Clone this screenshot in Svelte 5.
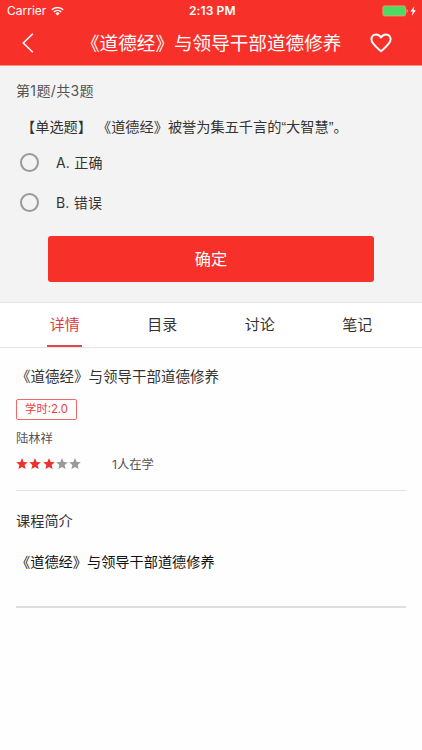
<script>
  const title = "《道德经》与领导干部道德修养";
  const options = [
    { key: "A", text: "正确" },
    { key: "B", text: "错误" },
  ];
  const tabs = ["详情", "目录", "讨论", "笔记"];
  const rating = 3;

  let activeTab = $state(0);
  let selected = $state(null);
  let liked = $state(false);
</script>

<div class="app">
  <header>
    <div class="status">
      <span class="carrier">Carrier</span>
      <svg class="wifi" width="13" height="10" viewBox="0 0 13 10" fill="none" stroke="#fff" stroke-width="1.5">
        <path d="M0.8 3.7a8.2 8.2 0 0 1 11.4 0" />
        <path d="M2.9 5.9a5.2 5.2 0 0 1 7.2 0" />
        <path d="M6.5 9.5 4.4 7.4a3 3 0 0 1 4.2 0z" fill="#fff" stroke="none" />
      </svg>
      <span class="time">2:13 PM</span>
      <svg class="battery" width="36" height="12" viewBox="0 0 36 12">
        <rect x="0.9" y="0.9" width="22.6" height="10" rx="1.6" fill="#4cd964" stroke="#e9a06c" stroke-width="0.9" />
        <path d="M24.6 4v4c1.3-.4 1.3-3.6 0-4z" fill="#ffb3ae" />
        <path d="M32.4 1.2 28.4 6.6h2.3l-.8 4.2 4-5.6h-2.4z" fill="#fff" />
      </svg>
    </div>
    <div class="nav">
      <button class="back" aria-label="返回">
        <svg width="12" height="20" viewBox="0 0 12 20" fill="none" stroke="#fff" stroke-width="1.6">
          <path d="M10.8 0.8 1.3 10l9.5 9.2" />
        </svg>
      </button>
      <h1>{title}</h1>
      <button class="like" aria-label="收藏" onclick={() => (liked = !liked)}>
        <svg width="22" height="20" viewBox="0 0 22 20" fill={liked ? "#fff" : "none"} stroke="#fff" stroke-width="2" stroke-linejoin="round">
          <path d="M11 18.2C7 14.8 1.4 10.6 1.4 6.3 1.4 3.5 3.5 1.4 6.2 1.4c2 0 3.7 1.1 4.8 3 1.1-1.9 2.8-3 4.8-3 2.7 0 4.8 2.1 4.8 4.9 0 4.3-5.6 8.5-9.6 11.9z" />
        </svg>
      </button>
    </div>
  </header>

  <section class="quiz">
    <p class="progress">第1题/共3题</p>
    <p class="question">【单选题】<span class="stem">《道德经》被誉为集五千言的“大智慧”。</span></p>
    {#each options as option}
      <label class="option">
        <input type="radio" name="answer" value={option.key} bind:group={selected} />
        <span>{option.key}. {option.text}</span>
      </label>
    {/each}
    <button class="submit">确定</button>
  </section>

  <nav class="tabs">
    {#each tabs as tab, i}
      <button class:active={activeTab === i} onclick={() => (activeTab = i)}><span>{tab}</span></button>
    {/each}
  </nav>

  <main>
    <section class="course">
      <h2>{title}</h2>
      <span class="hours">学时:2.0</span>
      <p class="teacher">陆林祥</p>
      <div class="meta">
        <div class="stars">
          {#each [1, 2, 3, 4, 5] as n}
            <svg class:on={n <= rating} width="12" height="12" viewBox="0 0 12 12">
              <path d="M6 0 7.6 3.9l4.2.3-3.2 2.7 1 4.2L6 8.9l-3.6 2.2 1-4.2L.2 4.2l4.2-.3z" />
            </svg>
          {/each}
        </div>
        <span class="learners">1人在学</span>
      </div>
    </section>
    <section class="intro">
      <h3>课程简介</h3>
      <p>{title}</p>
    </section>
  </main>
</div>

<style>
  :global(body) {
    margin: 0;
    background: #fff;
  }

  .app {
    height: 750px;
    overflow: hidden;
    background: #fefefe;
    color: #333;
    font-family: Inter, "Noto Sans CJK SC", sans-serif;
    font-size: 14.2px;
    font-weight: 400;
    text-spacing-trim: space-all;
  }

  h1,
  h2,
  h3,
  p {
    margin: 0;
    font-size: inherit;
    font-weight: inherit;
    white-space: nowrap;
  }

  button {
    padding: 0;
    border: 0;
    background: none;
    color: inherit;
    font: inherit;
  }

  header {
    box-sizing: border-box;
    height: 66px;
    border-bottom: 1px solid #fb8f8a;
    background: #f7312a;
    color: #fff;
  }

  .status {
    display: grid;
    grid-template-columns: 44px 138px 48px 1fr;
    align-items: center;
    height: 22px;
    padding: 0 4px 0 7px;
    font-size: 12px;
    line-height: 22px;
  }

  .time {
    font-weight: 600;
    letter-spacing: 0.1px;
    white-space: nowrap;
  }

  .battery {
    justify-self: end;
  }

  .nav {
    display: flex;
    align-items: center;
    height: 42px;
    padding: 0 31px 0 22px;
  }

  .nav svg {
    display: block;
  }

  h1 {
    flex: 1;
    margin: 0 29px 0 47px;
    font-size: 18.6px;
    line-height: 40px;
  }

  .quiz {
    box-sizing: border-box;
    height: 237px;
    padding: 13px 16px 0;
    border-bottom: 1px solid #e6e6e6;
    background: #f3f3f3;
  }

  .progress {
    color: #555;
    font-size: 14px;
    letter-spacing: 0.35px;
    line-height: 24px;
  }

  .question {
    margin-top: 12px;
    padding-left: 5px;
    font-family: "Liberation Sans", "Noto Sans CJK SC", sans-serif;
    line-height: 24px;
  }

  .stem {
    margin-left: 5px;
  }

  .option {
    display: flex;
    align-items: center;
    gap: 18px;
    height: 40px;
    padding-left: 4px;
    font-size: 14px;
    letter-spacing: 0.2px;
  }

  .question + .option {
    margin-top: 3px;
  }

  .option input {
    box-sizing: border-box;
    width: 19px;
    height: 19px;
    margin: 1px -1px 0 0;
    border: 2px solid #999;
    border-radius: 50%;
    appearance: none;
  }

  .option input:checked {
    border: 5px solid #f7312a;
  }

  .submit {
    display: block;
    width: 326px;
    height: 46px;
    margin: 14px 0 0 32px;
    border-radius: 3px;
    background: #f7312a;
    color: #fff;
    font-size: 16.2px;
    line-height: 46px;
  }

  .tabs {
    display: flex;
    box-sizing: border-box;
    height: 45px;
    padding: 0 16px;
    border-bottom: 1px solid #e4e4e4;
    background: #fff;
    font-size: 15px;
  }

  .tabs button {
    flex: 1;
    height: 44px;
  }

  .tabs span {
    display: inline-block;
    box-sizing: border-box;
    width: 35px;
    height: 44px;
    line-height: 43px;
    white-space: nowrap;
  }

  .tabs .active span {
    border-bottom: 2px solid #dc4a4d;
    color: #e03a3d;
  }

  main {
    padding: 0 16px;
  }

  .course {
    box-sizing: border-box;
    height: 143px;
    padding-top: 16px;
    border-bottom: 1px solid #e3e3e3;
  }

  h2 {
    font-size: 14.5px;
    line-height: 26px;
  }

  .hours {
    display: block;
    box-sizing: border-box;
    width: 61px;
    height: 21px;
    margin-top: 9px;
    border: 1px solid #f0696a;
    border-radius: 2px;
    color: #ec3b3b;
    font-size: 11.3px;
    line-height: 19px;
    text-align: center;
  }

  .teacher {
    margin-top: 9px;
    color: #555;
    font-size: 12.3px;
    line-height: 20px;
  }

  .meta {
    display: flex;
    align-items: center;
    height: 20px;
    margin-top: 5px;
    color: #555;
    font-size: 12.3px;
    line-height: 19px;
  }

  .stars {
    display: flex;
    gap: 1.35px;
    width: 96px;
  }

  .stars svg {
    fill: #999;
  }

  .stars .on {
    fill: #ee2f2b;
  }

  .intro {
    box-sizing: border-box;
    height: 117px;
    padding-top: 18px;
    border-bottom: 2px solid #dfdfdf;
    line-height: 24px;
  }

  .intro p {
    margin-top: 17px;
    color: #111;
  }
</style>
